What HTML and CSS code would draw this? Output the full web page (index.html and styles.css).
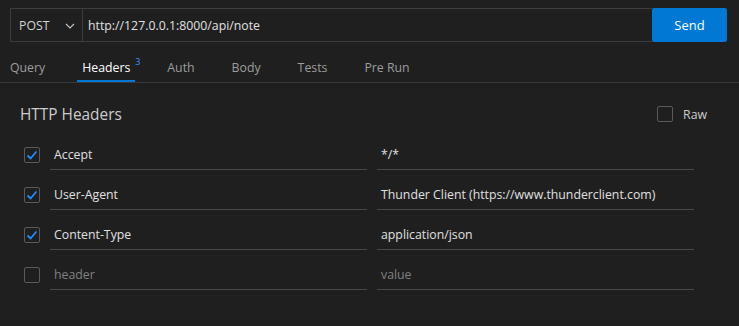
FILE: index.html
```html
<!DOCTYPE html>
<html lang="en">
<head>
    <meta charset="UTF-8">
    <title>Thunder Client - Headers</title>
    <link rel="stylesheet" href="styles.css">
</head>
<body>
    <div class="request-bar">
        <div class="url-box">
            <div class="method">
                <span>POST</span>
                <svg class="chevron" width="12" height="12" viewBox="0 0 12 12"><path d="M2 4l4 4 4-4" fill="none" stroke="#c5c5c5" stroke-width="1.1"/></svg>
            </div>
            <div class="url">http://127.0.0.1:8000/api/note</div>
        </div>
        <button class="send">Send</button>
    </div>

    <div class="tabs">
        <div class="tab">Query</div>
        <div class="tab active">Headers<sup>3</sup></div>
        <div class="tab">Auth</div>
        <div class="tab">Body</div>
        <div class="tab">Tests</div>
        <div class="tab">Pre Run</div>
    </div>

    <div class="panel">
        <div class="panel-head">
            <h2>HTTP Headers</h2>
            <label class="raw"><span class="box"></span>Raw</label>
        </div>

        <div class="row">
            <span class="box checked"><svg width="14" height="14" viewBox="0 0 14 14"><path d="M2.5 7.5l3 3 6-7" fill="none" stroke="#1e90ff" stroke-width="1.8"/></svg></span>
            <div class="field key">Accept</div>
            <div class="field val">*/*</div>
        </div>
        <div class="row">
            <span class="box checked"><svg width="14" height="14" viewBox="0 0 14 14"><path d="M2.5 7.5l3 3 6-7" fill="none" stroke="#1e90ff" stroke-width="1.8"/></svg></span>
            <div class="field key">User-Agent</div>
            <div class="field val">Thunder Client (https://www.thunderclient.com)</div>
        </div>
        <div class="row">
            <span class="box checked"><svg width="14" height="14" viewBox="0 0 14 14"><path d="M2.5 7.5l3 3 6-7" fill="none" stroke="#1e90ff" stroke-width="1.8"/></svg></span>
            <div class="field key">Content-Type</div>
            <div class="field val">application/json</div>
        </div>
        <div class="row">
            <span class="box"></span>
            <div class="field key placeholder">header</div>
            <div class="field val placeholder">value</div>
        </div>
    </div>
</body>
</html>
```

FILE: styles.css
```css
* {
    margin: 0;
    padding: 0;
    box-sizing: border-box;
}

body {
    background: #1f1f1f;
    color: #cccccc;
    font-family: 'Open Sans', 'Noto Sans', sans-serif;
    font-size: 12.3px;
    width: 739px;
    height: 326px;
    overflow: hidden;
}

/* request bar */
.request-bar {
    display: flex;
    padding: 8px 12px 0 10px;
    height: 42px;
}

.url-box {
    flex: 1;
    display: flex;
    border: 1px solid #3c3c3c;
    border-right: none;
}

.method {
    width: 72px;
    display: flex;
    align-items: center;
    justify-content: space-between;
    padding: 0 6px 0 8px;
    border-right: 1px solid #3c3c3c;
    color: #d4d4d4;
}

.chevron {
    margin-top: 1px;
}

.url {
    flex: 1;
    display: flex;
    align-items: center;
    padding-left: 5px;
    color: #e0e0e0;
}

.send {
    width: 75px;
    border: none;
    border-radius: 2px;
    background: #0078d4;
    color: #ffffff;
    font-family: inherit;
    font-size: 13px;
}

/* tabs */
.tabs {
    display: flex;
    gap: 27px;
    margin-top: 8px;
    padding-left: 5px;
    height: 33px;
    border-bottom: 1px solid #3a3a3a;
}

.tab {
    position: relative;
    color: #9d9d9d;
    padding: 9px 5px 0;
    height: 32px;
}

.tab.active {
    color: #ffffff;
    border-bottom: 2px solid #0078d4;
}

.tab sup {
    position: absolute;
    top: 5px;
    right: -5px;
    color: #3794ff;
    font-size: 9px;
}

/* panel */
.panel {
    padding: 0 32px 0 20px;
}

.panel-head {
    display: flex;
    justify-content: space-between;
    align-items: center;
    height: 48px;
    margin-top: 7px;
    margin-bottom: 10px;
}

h2 {
    font-weight: 400;
    font-size: 15.4px;
    color: #cccccc;
}

.raw {
    display: flex;
    align-items: center;
    gap: 10px;
    color: #cccccc;
}

.box {
    width: 16px;
    height: 16px;
    border: 1px solid #5a5a5a;
    border-radius: 2px;
    display: flex;
    align-items: center;
    justify-content: center;
    flex-shrink: 0;
}

.row {
    display: flex;
    align-items: flex-start;
    height: 40px;
    padding-left: 4px;
}

.row .box {
    margin-top: -1px;
    margin-right: 10px;
}

.field {
    height: 22px;
    padding: 0 4px;
    border-bottom: 1px solid #474747;
    color: #e0e0e0;
    line-height: 14px;
}

.key {
    width: 317px;
    margin-right: 10px;
}

.val {
    width: 317px;
}

.placeholder {
    color: #808080;
}
```
